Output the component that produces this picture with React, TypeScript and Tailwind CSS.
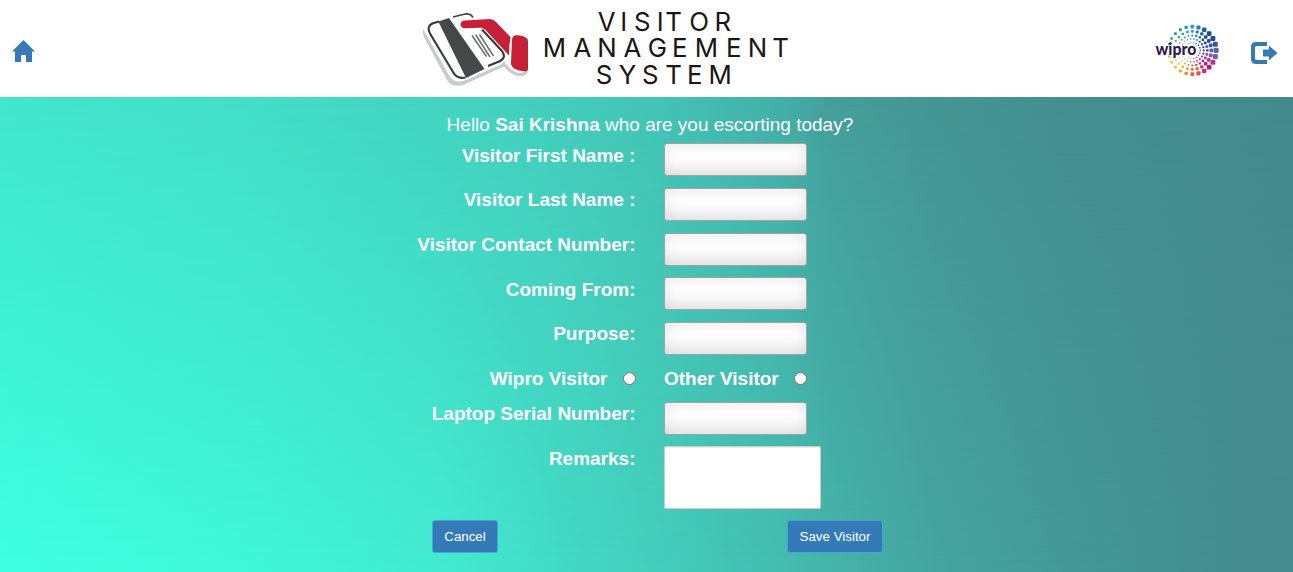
import React from 'react';

const fields = [
  { label: 'Visitor First Name :', row: 'h-[45px]', shift: '-mt-px' },
  { label: 'Visitor Last Name :', row: 'h-[45px]', shift: '-mt-0.5' },
  { label: 'Visitor Contact Number:', row: 'h-[44px]', shift: '-mt-0.5' },
  { label: 'Coming From:', row: 'h-[45px]', shift: '-mt-px' },
  { label: 'Purpose:', row: 'h-[44px]', shift: '-mt-0.5' },
];

const ROW = 'grid grid-cols-[635.5px_1fr] gap-x-[28.5px] items-start';
const LABEL = 'text-right text-[19px] leading-[27px] font-bold';
const INPUT =
  'block w-[143px] h-[33px] rounded-[3px] border border-[#a3a3a3] px-2 text-black bg-linear-to-b from-white from-40% to-[#f0f0f0] shadow-[inset_0_0_16px_rgba(0,0,0,0.1)] outline-none';
const BUTTON =
  'h-[33px] rounded-[3px] border border-[#46a5dc] bg-[#337ab7] text-[13.333px] leading-none text-white';
const RADIO = 'appearance-none block size-[13px] rounded-full border border-[#767676] bg-white';

function Brand() {
  return (
    <svg className="block" width="380" height="97" viewBox="415 0 380 97">
      <path d="M423.500 29 Q426 36 430 38 L455 80 L504 61 Q512 73 520 73 L527.500 71 Q528 74 524 75.500 Q514 79 504 66.500 L463 85 Q452 88 447 80 L424.500 38 Q422 33 423.500 29 Z" fill="#c5cdc8" />
      <path d="M434 20 L465 12 Q472 11 476 17 L504 50 Q508 59 501 64.500 L465 80.500 Q454 84 449 75.500 L427 36 Q423 26 434 20 Z" fill="#fff" />
      <path d="M439 21.500 L433 23.300 Q426 26 430 33.500 L453 72 Q457 79.500 465.500 77.500" fill="none" stroke="#343a39" strokeWidth="2.100" />
      <path d="M453 17 L464 14.200 Q470 12.500 473 17.500" fill="none" stroke="#3e4645" strokeWidth="1.700" />
      <path d="M482 29.500 L502 51 Q507 58 499 61.500 L488 66" fill="none" stroke="#343a39" strokeWidth="2.100" />
      <path d="M438.300 21.500 L449 18 L484.500 69 L466 78 Z" fill="#424a49" />
      <path d="M472 35.500 L486.500 56.500 M475.500 34.500 L490 57 M479.500 34.500 L493.500 56" stroke="#66706d" strokeWidth="1.500" />
      <path d="M465 20.500 L490 19 Q493 19 495.500 21.500 L510.500 37 Q509 45 509 55.500 L485 29.500 L481.500 27.800 L465 28.300 Q460.500 28 460.500 24.300 Q461 20.800 465 20.500 Z" fill="#c62038" />
      <path d="M516 35.300 Q522 34.500 526.500 38 Q528 39 528 41 L528 69 Q528 71.500 525 71.500 Q511 70 511 63 L512 40 Q512 36 516 35.300 Z" fill="#c62038" />
      <g fill="#1c1515" fontFamily="Inter, sans-serif" fontSize="25.800">
        <text y="31" x="597.700 620.200 633.900 656.800 665.200 689.300 714.600">VISITOR</text>
        <text y="57.300" x="542.800 573.500 597.300 623.500 647.700 672 694.800 726 747.800 772.300">MANAGEMENT</text>
        <text y="84" x="595.800 618.700 642 665.200 687 708.500">SYSTEM</text>
      </g>
    </svg>
  );
}

const rings = [
  { r: 23.8, n: 24, s: 3.9 },
  { r: 19, n: 24, s: 2.9 },
  { r: 15, n: 24, s: 2.1 },
  { r: 11.5, n: 22, s: 1.6 },
  { r: 8, n: 18, s: 1.2 },
];
const hues = ['#5b62ab', '#85579d', '#a83e90', '#c0177c', '#cc2f70', '#e0554f', '#e8643f', '#ef8c2c', '#f0a52c', '#efc33a', '#d6cf45', '#b5cc4c', '#92c95a', '#66b457', '#35a760', '#17a673', '#1ba78f', '#2aa5ad', '#3c95ce', '#287fbd', '#1b60a0', '#174f8e', '#244c92', '#3f569f'];

function Wipro() {
  return (
    <svg className="block" width="72" height="60" viewBox="1152 20 72 60">
      {rings.flatMap((g) =>
        Array.from({ length: g.n }, (_, i) => {
          const a = (i / g.n) * Math.PI * 2;
          const side = (Math.cos(a) + 1) / 2;
          const s = g.s * (0.6 + 0.7 * side);
          const x = 1192.3 + g.r * Math.cos(a);
          const y = 50.4 + g.r * Math.sin(a);
          if (x < 1198 && Math.abs(y - 50.4) < 6) return null;
          return (
            <rect key={g.r + '-' + i} x={x - s / 2} y={y - s / 2} width={s} height={s} rx={s * 0.25} fill={hues[Math.floor((i / g.n) * 24)]} />
          );
        }),
      )}
      <text x="1155.500" y="54.800" fontFamily="Lato, sans-serif" fontWeight="900" fontSize="16.500" textLength="41" lengthAdjust="spacingAndGlyphs" fill="#2f1950">
        wipro
      </text>
    </svg>
  );
}

export default function App() {
  return (
    <div className="flex h-[572px] w-[1293px] flex-col overflow-hidden font-['Liberation_Sans',Arial,sans-serif] text-white">
      <header className="flex h-[97px] items-start bg-white">
        <a className="ml-3 mt-10 block w-[403px]" aria-label="Home">
          <svg className="block" width="23" height="22" viewBox="0 0 23 22" fill="#337ab7">
            <path d="M11.500 0 L23 11.500 L20 11.500 L20 22 L14 22 L14 15 L9 15 L9 22 L3 22 L3 11.500 L0 11.500 Z" />
          </svg>
        </a>
        <Brand />
        <div className="ml-[357px] mt-5">
          <Wipro />
        </div>
        <a className="ml-[27px] mt-[42px]" aria-label="Log out">
          <svg className="block" width="27" height="22" viewBox="0 0 27 22" fill="#337ab7">
            <path d="M16 0 V4 H6 Q4 4 4 6 V16 Q4 18 6 18 H16 V22 H5 Q0 22 0 17 V5 Q0 0 5 0 Z" />
            <path d="M18 3.500 L26.500 11 L18 18.500 V14.500 H12 V7.500 H18 Z" />
          </svg>
        </a>
      </header>
      <main className="relative isolate flex-1">
        <div className="absolute inset-0 -z-20 bg-[linear-gradient(90deg,#41e6cc_0%,#43dec7_20%,#43d0be_40%,#43c4b5_51%,#44aea6_61%,#459f9b_64%,#459693_72%,#458f8f_82%,#448a8c_100%)]" />
        <div className="absolute inset-0 -z-10 bg-[linear-gradient(90deg,#3effe0_0%,#40f6d8_20%,#42ebd0_34%,#43d2bf_48%,#44bdb1_60%,#45a5a0_72%,#449897_83%,#448c8d_96%)] mask-t-from-0%" />
        <h1 className="pt-[14px] pl-[446.600px] text-[19px] leading-[27px]">
          Hello <b>Sai Krishna</b> who are you escorting today?
        </h1>
        <form className="mt-[5px]">
          {fields.map((f) => (
            <div key={f.label} className={`${ROW} ${f.row}`}>
              <label className={`${LABEL} ${f.shift}`}>{f.label}</label>
              <input className={INPUT} />
            </div>
          ))}
          <div className={`${ROW} h-[36px]`}>
            <label className="-mt-px flex items-center justify-end gap-[15px] text-[19px] leading-[27px] font-bold">
              Wipro Visitor <input type="radio" name="kind" className={RADIO} />
            </label>
            <label className="-mt-px flex items-center gap-[15.500px] text-[19px] leading-[27px] font-bold">
              Other Visitor <input type="radio" name="kind" className={RADIO} />
            </label>
          </div>
          <div className={`${ROW} h-[44px]`}>
            <label className={`${LABEL} -mt-0.5`}>Laptop Serial Number:</label>
            <input className={INPUT} />
          </div>
          <div className={`${ROW} h-[74px]`}>
            <label className={`${LABEL} -mt-px`}>Remarks:</label>
            <textarea className="block h-[63px] w-[157px] resize-none rounded-[2px] border border-[#ccc] bg-white text-black shadow-[inset_0_1px_1px_rgba(0,0,0,0.075)] outline-none" />
          </div>
          <div className="ml-[432px] flex w-[451px] justify-between">
            <button type="button" className={`${BUTTON} w-[66px]`}>Cancel</button>
            <button type="button" className={`${BUTTON} w-[96px]`}>Save Visitor</button>
          </div>
        </form>
      </main>
    </div>
  );
}
